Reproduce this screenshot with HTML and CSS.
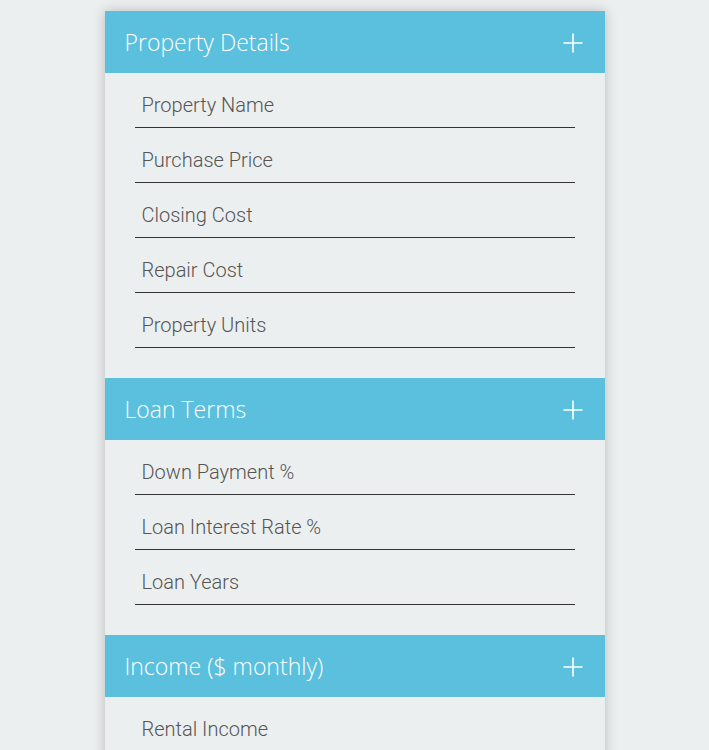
FILE: index.html
```html
<!DOCTYPE html>
<html>
<head>
<meta charset="utf-8">
<link rel="stylesheet" href="styles.css">
</head>
<body>
<div class="card">
  <section class="panel">
    <div class="panel-head">
      <h2 class="panel-title">Property Details</h2>
      <svg class="plus" width="20" height="20" viewBox="0 0 20 20"><path d="M10 0.5V19.5M0.5 10H19.5" stroke="#fff" stroke-width="1.6" fill="none"/></svg>
    </div>
    <div class="panel-body">
      <input class="field" type="text" placeholder="Property Name">
      <input class="field" type="text" placeholder="Purchase Price">
      <input class="field" type="text" placeholder="Closing Cost">
      <input class="field" type="text" placeholder="Repair Cost">
      <input class="field" type="text" placeholder="Property Units">
    </div>
  </section>
  <section class="panel">
    <div class="panel-head">
      <h2 class="panel-title">Loan Terms</h2>
      <svg class="plus" width="20" height="20" viewBox="0 0 20 20"><path d="M10 0.5V19.5M0.5 10H19.5" stroke="#fff" stroke-width="1.6" fill="none"/></svg>
    </div>
    <div class="panel-body">
      <input class="field" type="text" placeholder="Down Payment %">
      <input class="field" type="text" placeholder="Loan Interest Rate %">
      <input class="field" type="text" placeholder="Loan Years">
    </div>
  </section>
  <section class="panel">
    <div class="panel-head">
      <h2 class="panel-title">Income ($ monthly)</h2>
      <svg class="plus" width="20" height="20" viewBox="0 0 20 20"><path d="M10 0.5V19.5M0.5 10H19.5" stroke="#fff" stroke-width="1.6" fill="none"/></svg>
    </div>
    <div class="panel-body">
      <input class="field" type="text" placeholder="Rental Income">
      <input class="field" type="text" placeholder="Other Income">
    </div>
  </section>
</div>
</body>
</html>
```

FILE: styles.css
```css
html, body {
  margin: 0;
  padding: 0;
  background: #eceff0;
}
body {
  font-family: "Roboto", "Liberation Sans", sans-serif;
}
.card {
  width: 500px;
  margin: 11px auto 0;
  background: #ecefef;
  box-shadow: 0 0 12px rgba(0, 0, 0, 0.22);
}
.panel-head {
  height: 62px;
  background: #5bc0de;
  display: flex;
  align-items: center;
  justify-content: space-between;
  padding: 0 22px 0 20px;
}
.panel-title {
  margin: 0;
  font-family: "Open Sans", "Liberation Sans", sans-serif;
  font-weight: 300;
  font-size: 23px;
  color: #fff;
  line-height: 1;
}
.plus {
  display: block;
  margin-top: 1px;
}
.panel-body {
  display: flex;
  flex-direction: column;
  padding: 0 30px 30px;
}
.field {
  box-sizing: border-box;
  margin-top: 10px;
  height: 45px;
  border: none;
  border-bottom: 1px solid #333;
  background: transparent;
  padding: 0 7px;
  font-family: "Roboto", "Liberation Sans", sans-serif;
  font-weight: 300;
  font-size: 20px;
  color: #555;
  outline: none;
}
.field::placeholder {
  color: #555;
  opacity: 1;
}
```
